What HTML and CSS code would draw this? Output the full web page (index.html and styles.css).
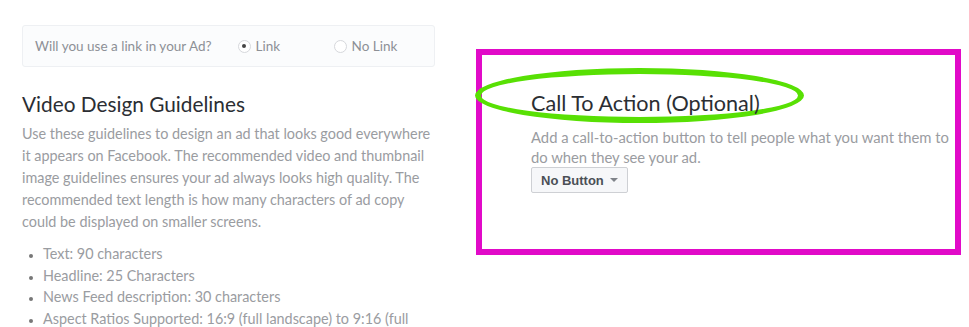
FILE: index.html
```html
<!DOCTYPE html>
<html lang="en">
<head>
    <meta charset="UTF-8">
    <title>Video Ad Setup</title>
    <link rel="stylesheet" href="styles.css">
</head>
<body>
    <div class="page">
        <div class="guidelines">
            <div class="link-choice">
                <span class="link-question">Will you use a link in your Ad?</span>
                <label class="radio-option">
                    <span class="radio checked"></span>
                    Link
                </label>
                <label class="radio-option">
                    <span class="radio"></span>
                    No Link
                </label>
            </div>
            <h2 class="section-title">Video Design Guidelines</h2>
            <p class="section-text">
                Use these guidelines to design an ad that looks good everywhere<br>
                it appears on Facebook. The recommended video and thumbnail<br>
                image guidelines ensures your ad always looks high quality. The<br>
                recommended text length is how many characters of ad copy<br>
                could be displayed on smaller screens.
            </p>
            <ul class="spec-list">
                <li>Text: 90 characters</li>
                <li>Headline: 25 Characters</li>
                <li>News Feed description: 30 characters</li>
                <li>Aspect Ratios Supported: 16:9 (full landscape) to 9:16 (full</li>
            </ul>
        </div>
        <div class="cta-column">
            <div class="cta-box">
                <div class="highlight"></div>
                <h2 class="section-title cta-title">Call To Action (Optional)</h2>
                <p class="section-text">
                    Add a call-to-action button to tell people what you want them to<br>
                    do when they see your ad.
                </p>
                <button class="cta-select">No Button <span class="caret"></span></button>
            </div>
        </div>
    </div>
</body>
</html>
```

FILE: styles.css
```css
* {
    box-sizing: border-box;
}

html, body {
    margin: 0;
    background: #fff;
    overflow: hidden;
}

body {
    font-family: Lato, "Open Sans", sans-serif;
    color: #1d2129;
}

.page {
    display: flex;
    padding-left: 22px;
}

.guidelines {
    width: 420px;
    padding-top: 25px;
    white-space: nowrap;
}

.link-choice {
    display: flex;
    align-items: center;
    height: 42px;
    width: 413px;
    padding-left: 12px;
    background: #fbfcfd;
    border: 1px solid #eef0f3;
    border-radius: 3px;
    font-size: 13.5px;
    color: #8d9096;
}

.link-question {
    margin-right: 26px;
}

.radio-option {
    display: flex;
    align-items: center;
    gap: 5px;
    width: 96px;
}

.radio {
    width: 13px;
    height: 13px;
    border-radius: 50%;
    border: 1px solid #d6d8dc;
    background: #fff;
    display: flex;
    align-items: center;
    justify-content: center;
}

.radio.checked::after {
    content: "";
    width: 4px;
    height: 4px;
    border-radius: 50%;
    background: #444;
}

.section-title {
    margin: 0;
    font-weight: 400;
    font-size: 20.8px;
    color: #2b2e33;
}

.guidelines .section-title {
    margin-top: 24px;
}

.section-text {
    margin: 7px 0 0;
    font-size: 14.4px;
    line-height: 22px;
    color: #9a9ca1;
}

.spec-list {
    margin: 10px 0 0;
    padding-left: 21px;
    font-size: 14.4px;
    line-height: 21.5px;
    color: #9a9ca1;
}

.spec-list li::marker {
    color: #777;
    font-size: 11px;
}

.cta-column {
    margin-left: 34px;
    padding-top: 49px;
}

.cta-box {
    position: relative;
    width: 485px;
    height: 206px;
    border: 6px solid #e10ac8;
    padding: 35px 10px 0 49px;
    white-space: nowrap;
}

.cta-title {
    position: relative;
    font-size: 21.6px;
}

.cta-box .section-text {
    margin-top: 11px;
    font-size: 14.8px;
    line-height: 20px;
}

.highlight {
    position: absolute;
    left: -7px;
    top: 13px;
    width: 329px;
    height: 55px;
    border: 6px solid #58e004;
    border-radius: 50%;
}

.cta-select {
    margin-top: 0;
    display: inline-flex;
    align-items: center;
    gap: 6px;
    height: 26px;
    padding: 0 9px;
    font-family: "Liberation Sans", Arial, sans-serif;
    font-weight: bold;
    font-size: 13px;
    color: #4b4f56;
    background: #f6f7f9;
    border: 1px solid #ced0d4;
    border-radius: 2px;
}

.caret {
    width: 0;
    height: 0;
    border-left: 4px solid transparent;
    border-right: 4px solid transparent;
    border-top: 4px solid #7f8389;
}
```
